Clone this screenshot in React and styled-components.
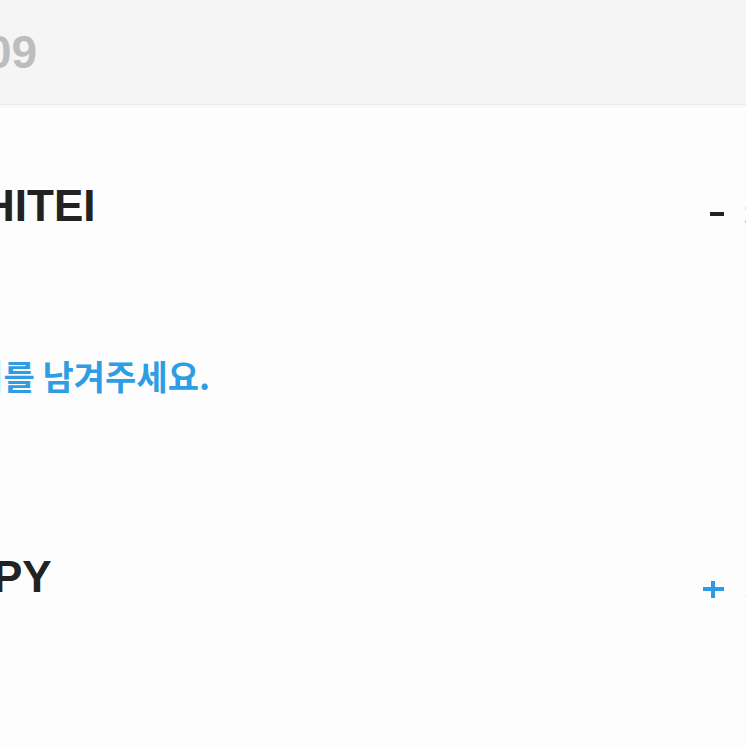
import React from 'react';
import styled, { createGlobalStyle } from 'styled-components';

const GlobalStyle = createGlobalStyle`
  html, body {
    margin: 0;
    padding: 0;
    background: #fdfdfd;
    overflow: hidden;
  }
  body {
    font-family: "Liberation Sans", Arial, "Noto Sans CJK KR", sans-serif;
  }
`;

const Page = styled.div`
  width: 746px;
  height: 746px;
  overflow: hidden;
  background: #fdfdfd;
`;

const Header = styled.header`
  height: 104px;
  background: #f5f5f5;
  border-bottom: 1px solid #ebebeb;
  box-shadow: 0 2px 4px rgba(0, 0, 0, 0.03);
  display: flex;
  align-items: center;
  overflow: hidden;
`;

const HeaderTitle = styled.div`
  font-size: 46px;
  font-weight: 700;
  color: #bdbdbd;
  line-height: 1;
  margin-left: ${p => p.offset}px;
  white-space: nowrap;
`;

const Section = styled.section`
  margin-top: ${p => p.top}px;
`;

const Row = styled.div`
  display: flex;
  align-items: flex-start;
  justify-content: space-between;
  height: 44px;
`;

const Title = styled.h2`
  margin: 0 0 0 ${p => p.offset}px;
  font-size: 44px;
  font-weight: 700;
  line-height: 44px;
  color: #222;
  white-space: nowrap;
`;

const Controls = styled.div`
  display: flex;
  align-items: center;
  gap: ${p => p.gap}px;
  margin-right: -23px;
  padding-top: ${p => p.pad}px;
`;

const MinusBar = styled.span`
  display: block;
  width: 14px;
  height: 4px;
  background: #222;
`;

const PlusIcon = styled.span`
  position: relative;
  display: block;
  width: 21px;
  height: 17px;

  &::before,
  &::after {
    content: '';
    position: absolute;
    background: #2c9be3;
  }
  &::before {
    left: 0;
    right: 0;
    top: 6px;
    height: 4px;
  }
  &::after {
    top: 0;
    bottom: 0;
    left: 8px;
    width: 4px;
  }
`;

const Count = styled.span`
  display: block;
  width: 25px;
  font-size: 28px;
  font-weight: 700;
  line-height: 20px;
  color: ${p => p.color};
`;

const Notice = styled.p`
  margin: ${p => p.top}px 0 0 ${p => p.offset}px;
  font-family: "Noto Sans CJK KR", "Noto Sans", sans-serif;
  font-size: 34px;
  font-weight: 700;
  line-height: 33px;
  color: #2f9de3;
  white-space: nowrap;
`;

const App = () => {
  return (
    <Page>
      <GlobalStyle />
      <Header>
        <HeaderTitle offset={-14}>09</HeaderTitle>
      </Header>

      <Section top={79}>
        <Row>
          <Title offset={-17}>HITEI</Title>
          <Controls pad={20} gap={20}>
            <MinusBar />
            <Count color="#222">1</Count>
          </Controls>
        </Row>
        <Notice top={131} offset={-59}>후기를 남겨주세요.</Notice>
      </Section>

      <Section top={163}>
        <Row>
          <Title offset={-7}>PY</Title>
          <Controls pad={24} gap={20}>
            <PlusIcon />
            <Count color="#7cc2ef">1</Count>
          </Controls>
        </Row>
      </Section>
    </Page>
  );
};

export default App;
